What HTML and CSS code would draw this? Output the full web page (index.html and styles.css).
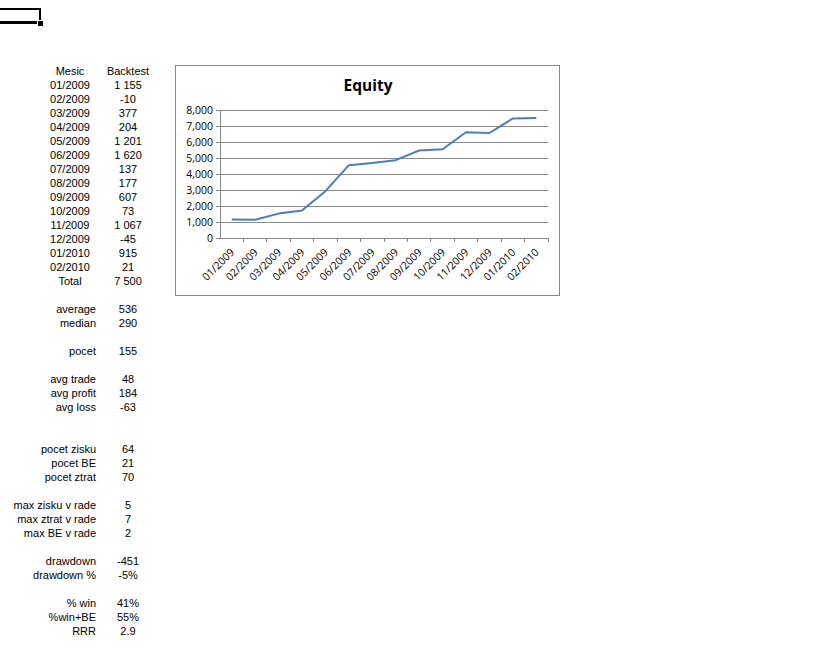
FILE: index.html
```html
<!DOCTYPE html>
<html>
<head>
<meta charset="utf-8">
<link rel="stylesheet" href="styles.css">
</head>
<body>
<div class="selection"><span class="handle"></span></div>
<div class="content">
  <div class="sheet">
    <div class="c hd">Mesic</div><div class="v">Backtest</div>
    <div class="c hd">01/2009</div><div class="v">1 155</div>
    <div class="c hd">02/2009</div><div class="v">-10</div>
    <div class="c hd">03/2009</div><div class="v">377</div>
    <div class="c hd">04/2009</div><div class="v">204</div>
    <div class="c hd">05/2009</div><div class="v">1 201</div>
    <div class="c hd">06/2009</div><div class="v">1 620</div>
    <div class="c hd">07/2009</div><div class="v">137</div>
    <div class="c hd">08/2009</div><div class="v">177</div>
    <div class="c hd">09/2009</div><div class="v">607</div>
    <div class="c hd">10/2009</div><div class="v">73</div>
    <div class="c hd">11/2009</div><div class="v">1 067</div>
    <div class="c hd">12/2009</div><div class="v">-45</div>
    <div class="c hd">01/2010</div><div class="v">915</div>
    <div class="c hd">02/2010</div><div class="v">21</div>
    <div class="c hd">Total</div><div class="v">7 500</div>
    <div class="c"></div><div class="v"></div>
    <div class="c lb">average</div><div class="v">536</div>
    <div class="c lb">median</div><div class="v">290</div>
    <div class="c"></div><div class="v"></div>
    <div class="c lb">pocet</div><div class="v">155</div>
    <div class="c"></div><div class="v"></div>
    <div class="c lb">avg trade</div><div class="v">48</div>
    <div class="c lb">avg profit</div><div class="v">184</div>
    <div class="c lb">avg loss</div><div class="v">-63</div>
    <div class="c"></div><div class="v"></div>
    <div class="c"></div><div class="v"></div>
    <div class="c lb">pocet zisku</div><div class="v">64</div>
    <div class="c lb">pocet BE</div><div class="v">21</div>
    <div class="c lb">pocet ztrat</div><div class="v">70</div>
    <div class="c"></div><div class="v"></div>
    <div class="c lb">max zisku v rade</div><div class="v">5</div>
    <div class="c lb">max ztrat v rade</div><div class="v">7</div>
    <div class="c lb">max BE v rade</div><div class="v">2</div>
    <div class="c"></div><div class="v"></div>
    <div class="c lb">drawdown</div><div class="v">-451</div>
    <div class="c lb">drawdown %</div><div class="v">-5%</div>
    <div class="c"></div><div class="v"></div>
    <div class="c lb">% win</div><div class="v">41%</div>
    <div class="c lb">%win+BE</div><div class="v">55%</div>
    <div class="c lb">RRR</div><div class="v">2.9</div>
  </div>
  <div class="chart">
    <svg class="chart-svg" width="383" height="229" viewBox="176 66 383 229">
      <text class="title" x="368" y="91" text-anchor="middle">Equity</text>
      <g class="grid">
        <line x1="220" y1="110" x2="548" y2="110"/>
        <line x1="220" y1="126" x2="548" y2="126"/>
        <line x1="220" y1="142" x2="548" y2="142"/>
        <line x1="220" y1="158" x2="548" y2="158"/>
        <line x1="220" y1="174" x2="548" y2="174"/>
        <line x1="220" y1="190" x2="548" y2="190"/>
        <line x1="220" y1="206" x2="548" y2="206"/>
        <line x1="220" y1="222" x2="548" y2="222"/>
        <line x1="220" y1="238" x2="548" y2="238"/>
        <line x1="220" y1="110" x2="220" y2="238"/>
        <line x1="216" y1="110" x2="220" y2="110"/>
        <line x1="216" y1="126" x2="220" y2="126"/>
        <line x1="216" y1="142" x2="220" y2="142"/>
        <line x1="216" y1="158" x2="220" y2="158"/>
        <line x1="216" y1="174" x2="220" y2="174"/>
        <line x1="216" y1="190" x2="220" y2="190"/>
        <line x1="216" y1="206" x2="220" y2="206"/>
        <line x1="216" y1="222" x2="220" y2="222"/>
        <line x1="216" y1="238" x2="220" y2="238"/>
        <line x1="243.4" y1="238" x2="243.4" y2="242"/>
        <line x1="266.9" y1="238" x2="266.9" y2="242"/>
        <line x1="290.3" y1="238" x2="290.3" y2="242"/>
        <line x1="313.7" y1="238" x2="313.7" y2="242"/>
        <line x1="337.1" y1="238" x2="337.1" y2="242"/>
        <line x1="360.6" y1="238" x2="360.6" y2="242"/>
        <line x1="384" y1="238" x2="384" y2="242"/>
        <line x1="407.4" y1="238" x2="407.4" y2="242"/>
        <line x1="430.9" y1="238" x2="430.9" y2="242"/>
        <line x1="454.3" y1="238" x2="454.3" y2="242"/>
        <line x1="477.7" y1="238" x2="477.7" y2="242"/>
        <line x1="501.1" y1="238" x2="501.1" y2="242"/>
        <line x1="524.6" y1="238" x2="524.6" y2="242"/>
        <line x1="548" y1="238" x2="548" y2="242"/>
      </g>
      <g class="ylab">
        <text x="213" y="114">8,000</text>
        <text x="213" y="130">7,000</text>
        <text x="213" y="146">6,000</text>
        <text x="213" y="162">5,000</text>
        <text x="213" y="178">4,000</text>
        <text x="213" y="194">3,000</text>
        <text x="213" y="210">2,000</text>
        <text x="213" y="226">1,000</text>
        <text x="213" y="242">0</text>
      </g>
      <polyline class="series" points="231.7,219.5 255.1,219.7 278.6,213.6 302,210.4 325.4,191.2 348.9,165.2 372.3,163.1 395.7,160.2 419.1,150.5 442.6,149.3 466,132.3 489.4,133 512.9,118.4 536.3,118"/>
      <g class="xlab">
        <text transform="translate(235,253) rotate(-45)">01/2009</text>
        <text transform="translate(258.4,253) rotate(-45)">02/2009</text>
        <text transform="translate(281.9,253) rotate(-45)">03/2009</text>
        <text transform="translate(305.3,253) rotate(-45)">04/2009</text>
        <text transform="translate(328.7,253) rotate(-45)">05/2009</text>
        <text transform="translate(352.2,253) rotate(-45)">06/2009</text>
        <text transform="translate(375.6,253) rotate(-45)">07/2009</text>
        <text transform="translate(399,253) rotate(-45)">08/2009</text>
        <text transform="translate(422.4,253) rotate(-45)">09/2009</text>
        <text transform="translate(445.9,253) rotate(-45)">10/2009</text>
        <text transform="translate(469.3,253) rotate(-45)">11/2009</text>
        <text transform="translate(492.7,253) rotate(-45)">12/2009</text>
        <text transform="translate(516.2,253) rotate(-45)">01/2010</text>
        <text transform="translate(539.6,253) rotate(-45)">02/2010</text>
      </g>
    </svg>
  </div>
</div>
</body>
</html>
```

FILE: styles.css
```css
html, body {
  margin: 0;
  padding: 0;
  background: #ffffff;
}

body {
  font-family: "Liberation Sans", Arial, sans-serif;
  font-size: 11px;
  color: #000;
}

.selection {
  position: relative;
  margin-top: 8px;
  width: 39px;
  height: 11px;
  border-top: 2px solid #000;
  border-right: 2px solid #000;
  border-bottom: 3px solid #000;
}

.handle {
  position: absolute;
  right: -4px;
  bottom: -5px;
  width: 5px;
  height: 5px;
  background: #000;
  border: 1px solid #fff;
  border-right: none;
  border-bottom: none;
}

.content {
  display: flex;
  align-items: flex-start;
  margin-top: 40px;
}

.sheet {
  display: grid;
  grid-template-columns: 100px 56px;
  grid-auto-rows: 14px;
  line-height: 14px;
  white-space: nowrap;
}

.c.hd {
  padding-left: 40px;
  text-align: center;
}

.c.lb {
  padding-right: 4px;
  text-align: right;
}

.v {
  text-align: center;
}

.chart {
  margin-left: 19px;
  margin-top: 1px;
  width: 383px;
  height: 229px;
  border: 1px solid #878787;
}

.chart-svg {
  display: block;
}

.title {
  font-family: "Open Sans", sans-serif;
  font-weight: 700;
  font-size: 15.5px;
  fill: #000;
}

.grid line {
  stroke: #878787;
  stroke-width: 1;
  shape-rendering: crispEdges;
}

.ylab text {
  font-family: "Open Sans", sans-serif;
  font-size: 10.5px;
  text-anchor: end;
  fill: #000;
}

.xlab text {
  font-family: "Open Sans", sans-serif;
  font-size: 10.5px;
  text-anchor: end;
  fill: #000;
}

.series {
  fill: none;
  stroke: #4a7ebb;
  stroke-width: 2;
  stroke-linejoin: round;
}
```
